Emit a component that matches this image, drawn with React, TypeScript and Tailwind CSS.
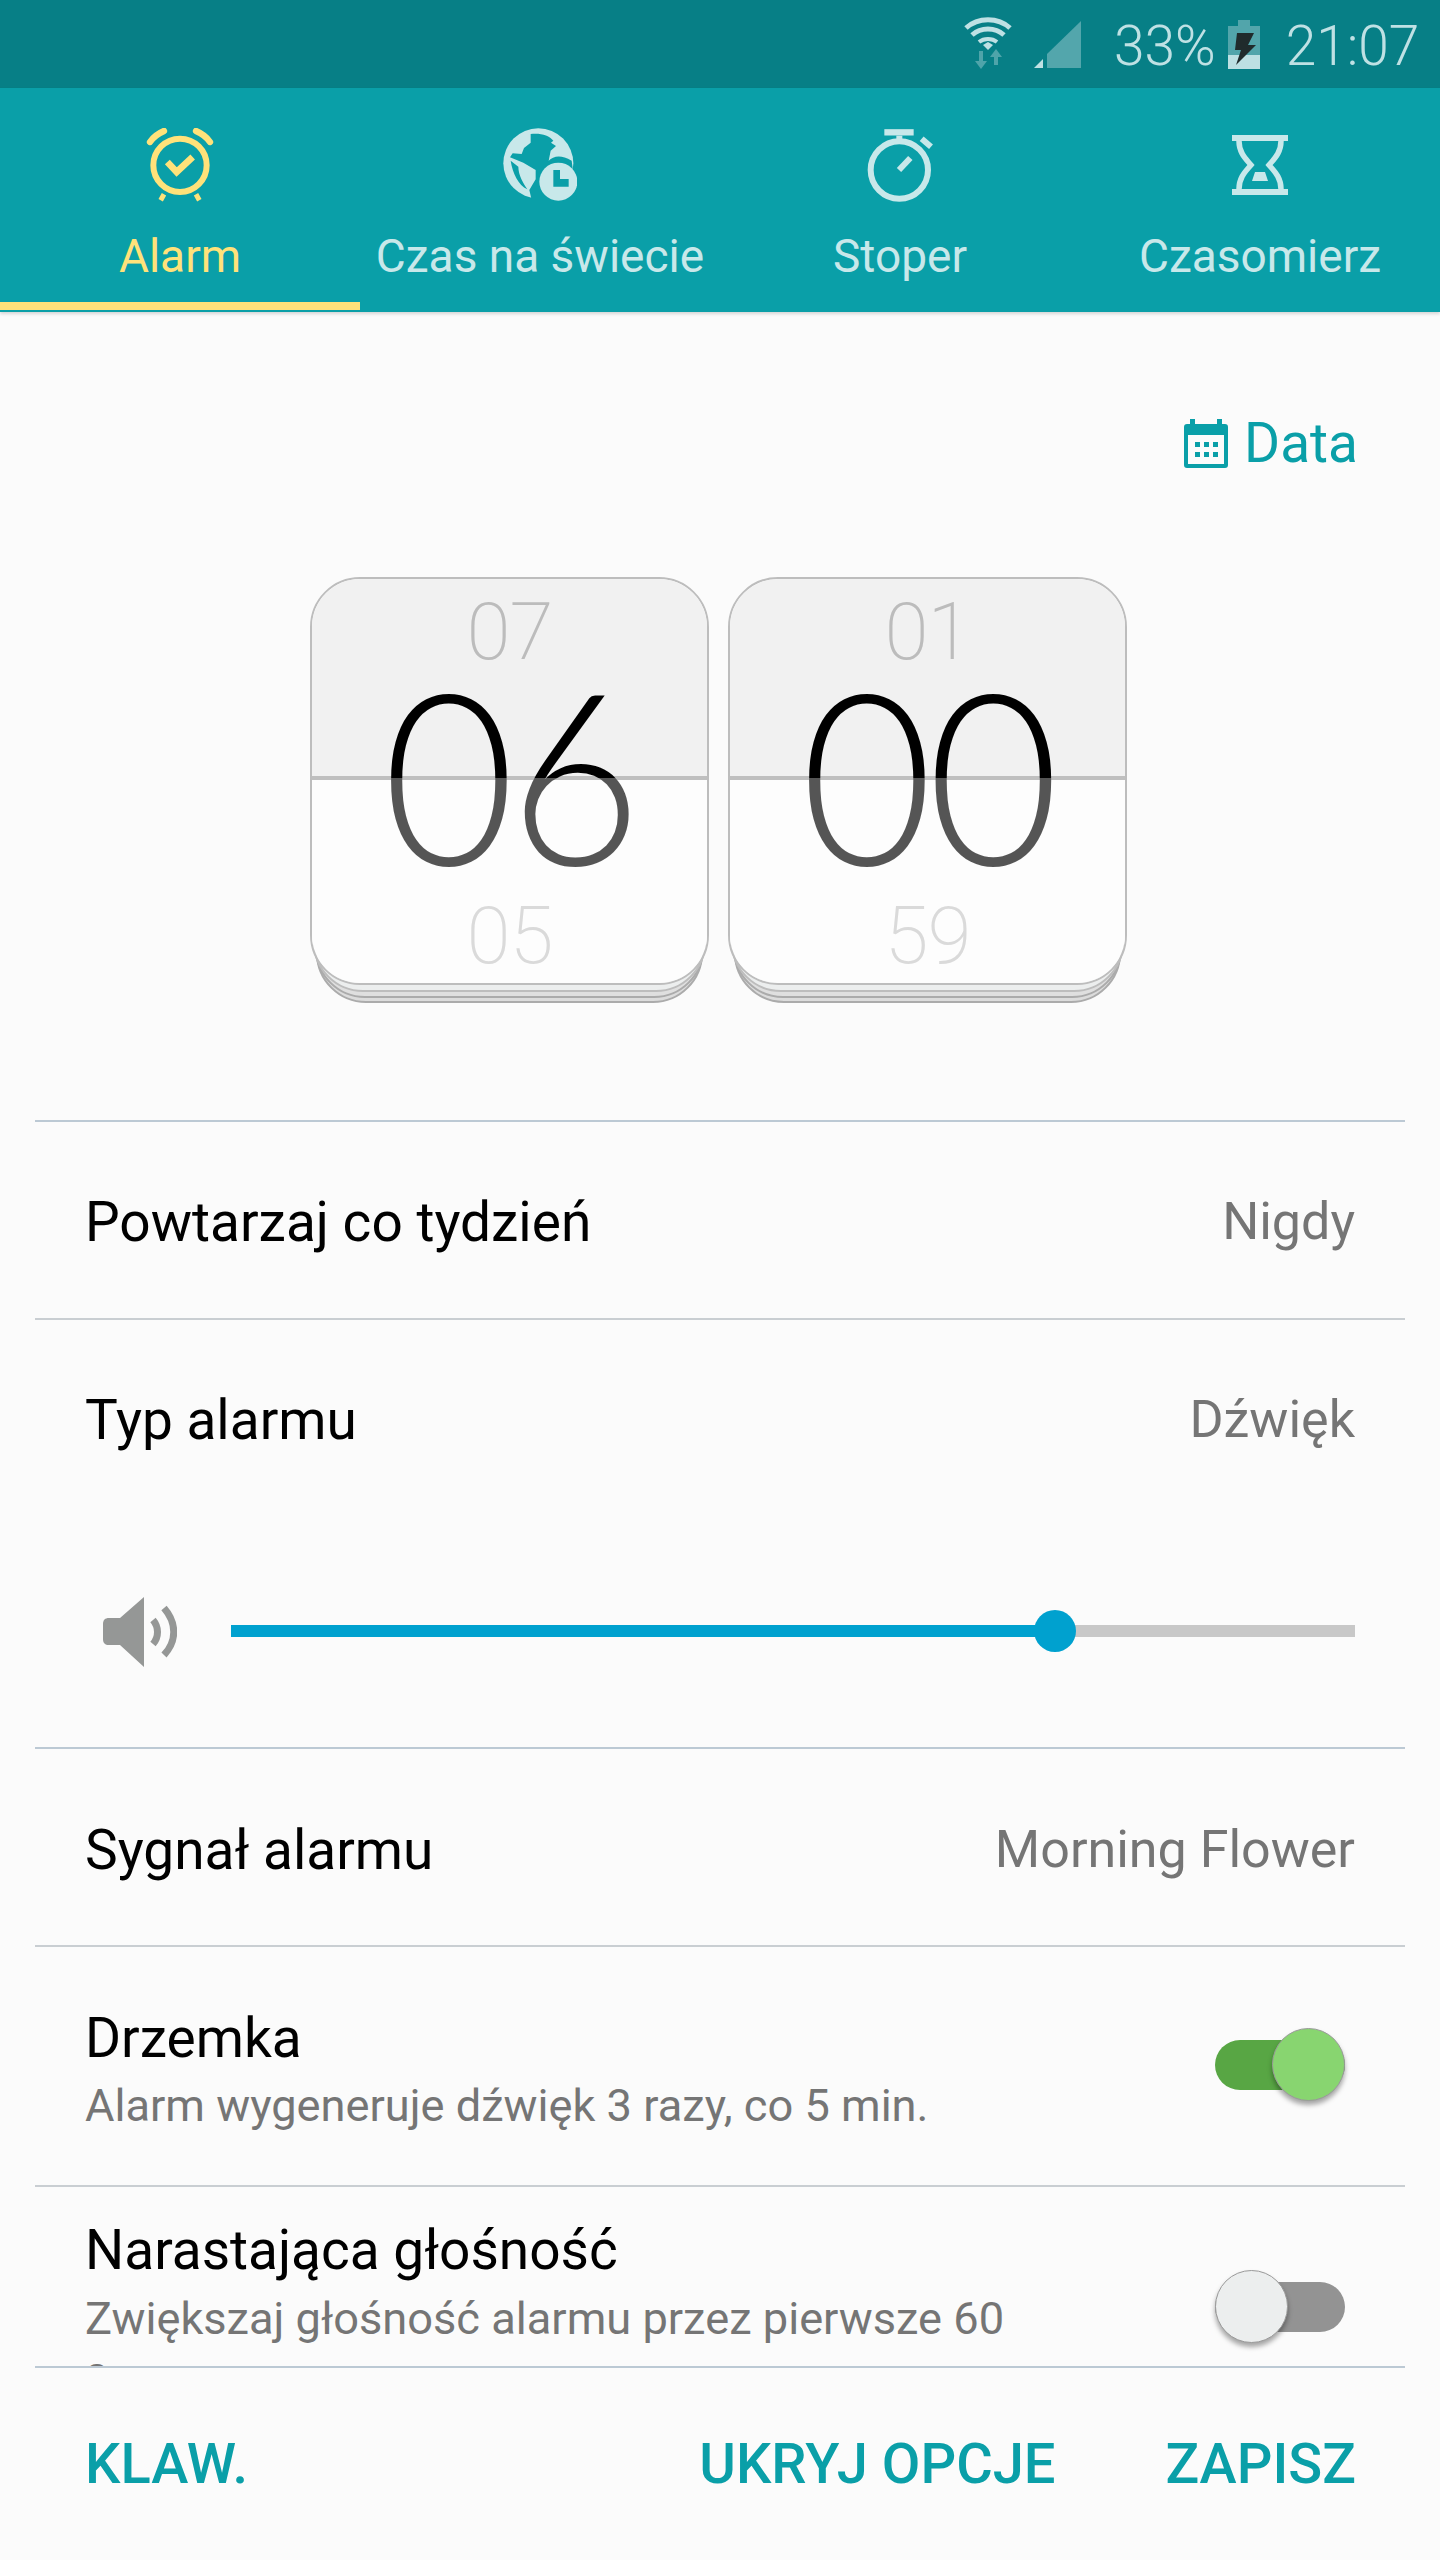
import type { ReactNode } from "react";

const font = { fontFamily: "Roboto, sans-serif" };
const flipFont = { fontFamily: "Lato, Roboto, sans-serif" };

function WifiIcon() {
  return (
    <svg width="50" height="54" viewBox="0 0 50 54" fill="none">
      <path d="M2 11C14 0 34 0 46 11" stroke="#bfe1e4" strokeWidth="5" />
      <path d="M8 18C17 10 31 10 40 18" stroke="#bfe1e4" strokeWidth="5" />
      <path d="M15 25C20 21 28 21 33 25" stroke="#bfe1e4" strokeWidth="4" />
      <path d="M19 28L24 25L29 28L24 33Z" fill="#bfe1e4" />
      <path d="M15 34H19V44H23L17 52L11 44H15Z" fill="#4fa4aa" />
      <path d="M30 48H34V40H38L32 32L26 40H30Z" fill="#4fa4aa" />
    </svg>
  );
}

function SignalIcon() {
  return (
    <svg width="47" height="47" viewBox="0 0 47 47">
      <path d="M47 0V47H13V33Z" fill="#53a6ac" />
      <path d="M9 38V47H0Z" fill="#bfe1e4" />
    </svg>
  );
}

function BatteryIcon() {
  return (
    <svg width="32" height="49" viewBox="0 0 32 49">
      <path d="M10 0H22V6H32V35H0V6H10Z" fill="#52a5ab" />
      <rect y="35" width="32" height="14" fill="#bde0e3" />
      <path d="M9 13H26L20 25H28L8 45L13 30H7Z" fill="#202b2c" />
    </svg>
  );
}

function AlarmIcon() {
  return (
    <svg width="68" height="74" viewBox="48 23 204 222" fill="none" stroke="#ffe27a">
      <circle cx="150" cy="135" r="80" strokeWidth="18" />
      <path d="M112 125L140 155L188 110" strokeWidth="20" />
      <path d="M60 65Q74 44 102 32M198 32Q226 44 240 65" strokeWidth="19" strokeLinecap="round" />
      <path d="M102 222L92 240M198 222L208 240" strokeWidth="15" />
    </svg>
  );
}

function GlobeIcon() {
  return (
    <svg width="74" height="74" viewBox="39 24 222 222">
      <circle cx="145" cy="130" r="105" fill="#c8e8ea" />
      <path
        d="M122 42C150 38 178 46 190 62L183 68L198 78L182 92L176 122C190 108 212 102 245 122L260 240L125 240L118 210L137 178L137 150L100 128L60 112L68 100L95 102L102 84L122 68Z"
        fill="#0a9fa8"
      />
      <path d="M62 122L85 140C85 165 100 190 112 208C85 195 68 160 62 122Z" fill="#0a9fa8" />
      <circle cx="205" cy="185" r="57" fill="#c8e8ea" />
      <path d="M190 150H210V177H236V200H190Z" fill="#0a9fa8" />
    </svg>
  );
}

function StopwatchIcon() {
  return (
    <svg width="66" height="74" viewBox="50 24 198 222" fill="none" stroke="#c8e8ea">
      <circle cx="147" cy="150" r="86" strokeWidth="18" />
      <path d="M102 37H190" strokeWidth="19" />
      <path d="M147 47V62" strokeWidth="18" />
      <path d="M214 56L242 80" strokeWidth="18" />
      <path d="M146 150L180 114" strokeWidth="18" />
    </svg>
  );
}

function HourglassIcon() {
  return (
    <svg width="56" height="60" viewBox="0 0 56 60" fill="none" stroke="#c8e8ea">
      <path d="M0 3H56M0 57H56" strokeWidth="6" />
      <path d="M7 6C7 18 14 24 19 30C14 36 7 42 7 54M49 6C49 18 42 24 37 30C42 36 49 42 49 54" strokeWidth="5.5" />
      <path d="M23 37H33L36 46H20Z" fill="#c8e8ea" stroke="none" />
    </svg>
  );
}

function CalendarIcon() {
  return (
    <svg width="44" height="49" viewBox="0 0 44 49">
      <path d="M6 0H11V5H33V0H38V5H41C43 5 44 6 44 8V46C44 48 43 49 41 49H3C1 49 0 48 0 46V8C0 6 1 5 3 5H6Z" fill="#0a9fa8" />
      <rect x="4" y="16" width="36" height="29" fill="#fbfbfb" />
      <path d="M11 23h5v5h-5zM20 23h5v5h-5zM29 23h5v5h-5zM11 33h5v5h-5zM20 33h5v5h-5zM29 33h5v5h-5z" fill="#0a9fa8" />
    </svg>
  );
}

function SpeakerIcon() {
  return (
    <svg width="74" height="70" viewBox="0 0 74 70" fill="none">
      <path d="M41 0V70L17 48H6C2 48 0 46 0 42V27C0 23 2 21 6 21H17Z" fill="#959796" />
      <path d="M50 23C56 30 56 40 50 47" stroke="#959796" strokeWidth="7" />
      <path d="M61 11C74 26 74 44 61 58" stroke="#959796" strokeWidth="7" />
    </svg>
  );
}

function Tab({ icon, label, active }: { icon: ReactNode; label: string; active?: boolean }) {
  return (
    <div className="relative flex flex-col items-center">
      <div className="mt-[40px] flex h-[74px] items-center justify-center">{icon}</div>
      <span className={`mt-[27px] text-[46px] leading-[54px] ${active ? "text-[#ffe27a]" : "text-[#c8e8ea]"}`}>{label}</span>
      {active && <div className="absolute left-0 right-0 top-[214px] h-[8px] bg-[#ffe27a]" />}
    </div>
  );
}

function Flip({ top, main, bottom }: { top: string; main: string; bottom: string }) {
  return (
    <div className="relative h-[426px] w-[399px]">
      <div className="absolute bottom-0 left-[6px] right-[6px] h-[100px] rounded-b-[50px] border-2 border-[#ababab] bg-[#dcdcdc]" />
      <div className="absolute bottom-[5px] left-[5px] right-[5px] h-[100px] rounded-b-[50px] border-2 border-[#ababab] bg-[#dfdfdf]" />
      <div className="absolute bottom-[11px] left-[3px] right-[3px] h-[100px] rounded-b-[50px] border-2 border-[#bdbdbd] bg-[#eceeee]" />
      <div className="relative flex h-[408px] flex-col overflow-hidden rounded-[50px] border-2 border-[#bdbdbd]">
        <div className="flex h-[197px] items-start justify-center bg-[#f1f1f1] pt-[8px] text-[80px] font-extralight leading-[90px] tracking-[-1px] text-[#bcbcbc]">
          {top}
        </div>
        <div className="h-[4px] bg-[#bfbfbf]" />
        <div className="flex flex-1 items-end justify-center bg-[#fdfdfd] pb-[2px] text-[80px] font-extralight leading-[90px] tracking-[-1px] text-[#dadada]">
          {bottom}
        </div>
        <div className="absolute inset-0 flex items-center justify-center pb-[18px]" style={flipFont}>
          <span className="scale-x-[0.95] bg-[linear-gradient(#000_0,#000_156px,#555_156px,#555_100%)] bg-clip-text text-[240px] font-light leading-[300px] tracking-[-6px] text-transparent">
            {main}
          </span>
        </div>
      </div>
    </div>
  );
}

function Row({ title, value, className }: { title: string; value: string; className?: string }) {
  return (
    <div className={`mx-[35px] flex items-center justify-between px-[50px] ${className ?? ""}`}>
      <span className="text-[55px] leading-[64px] text-black">{title}</span>
      <span className="text-[52px] leading-[64px] text-[#757575]">{value}</span>
    </div>
  );
}

function Toggle({ on }: { on: boolean }) {
  return (
    <div className="relative h-[50px] w-[130px]">
      <div className={`h-full rounded-full ${on ? "bg-[#58a644]" : "bg-[#939393]"}`} />
      <div
        className={`absolute top-[-12px] h-[73px] w-[73px] rounded-full border border-[#9a9a9a] shadow-[0_4px_5px_rgba(0,0,0,0.35)] ${
          on ? "right-0 bg-[#88d570]" : "left-0 bg-[#eceeee]"
        }`}
      />
    </div>
  );
}

export default function App() {
  return (
    <div className="flex h-[2560px] w-[1440px] flex-col overflow-hidden bg-[#fbfbfb]" style={font}>
      <div className="flex h-[88px] items-center bg-[#077f86] text-[#bfe1e4]">
        <div className="ml-[964px]"><WifiIcon /></div>
        <div className="ml-[20px]"><SignalIcon /></div>
        <span className="ml-[33px] mt-[4px] text-[55px] font-light leading-[60px]">33%</span>
        <div className="ml-[12px]"><BatteryIcon /></div>
        <span className="ml-[26px] mt-[4px] text-[55px] font-light leading-[60px]">21:07</span>
      </div>

      <div className="grid h-[224px] grid-cols-4 bg-[#0a9fa8] shadow-[0_2px_3px_rgba(0,0,0,0.15)]">
        <Tab icon={<AlarmIcon />} label="Alarm" active />
        <Tab icon={<GlobeIcon />} label="Czas na świecie" />
        <Tab icon={<StopwatchIcon />} label="Stoper" />
        <Tab icon={<HourglassIcon />} label="Czasomierz" />
      </div>

      <div className="h-[2054px] overflow-hidden">
        <div className="flex items-center justify-end gap-[16px] pr-[82px] pt-[107px]">
          <CalendarIcon />
          <span className="text-[55px] leading-[49px] text-[#0a9fa8]">Data</span>
        </div>

        <div className="ml-[310px] mt-[109px] flex gap-[19px]">
          <Flip top="07" main="06" bottom="05" />
          <Flip top="01" main="00" bottom="59" />
        </div>

        <div className="mx-[35px] mt-[117px] h-[2px] bg-[#bcc9d4]" />
        <Row title="Powtarzaj co tydzień" value="Nigdy" className="h-[196px] pt-[3px]" />
        <div className="mx-[35px] h-[2px] bg-[#c9ced2]" />
        <Row title="Typ alarmu" value="Dźwięk" className="h-[196px] pt-[4px]" />

        <div className="mx-[35px] flex h-[231px] items-start pl-[68px] pr-[50px] pt-[81px]">
          <SpeakerIcon />
          <div className="relative ml-[54px] mt-[28px] h-[12px] flex-1 bg-[#c8c8c8]">
            <div className="h-full w-[824px] bg-[#00a1cf]" />
            <div className="absolute left-[803px] top-[-15px] h-[42px] w-[42px] rounded-full bg-[#00a1cf]" />
          </div>
        </div>

        <div className="mx-[35px] h-[2px] bg-[#bcc9d4]" />
        <Row title="Sygnał alarmu" value="Morning Flower" className="h-[196px] pt-[5px]" />
        <div className="mx-[35px] h-[2px] bg-[#c9ced2]" />

        <div className="mx-[35px] flex h-[238px] items-center justify-between pl-[50px] pr-[60px] pt-[6px]">
          <div className="flex flex-col">
            <span className="text-[55px] leading-[64px] text-black">Drzemka</span>
            <span className="mt-[9px] text-[45.2px] leading-[54px] text-[#757575]">Alarm wygeneruje dźwięk 3 razy, co 5 min.</span>
          </div>
          <div className="mb-[8px]"><Toggle on /></div>
        </div>
        <div className="mx-[35px] h-[2px] bg-[#c9ced2]" />

        <div className="mx-[35px] flex items-start justify-between pl-[50px] pr-[60px] pt-[31px]">
          <div className="flex w-[960px] flex-col">
            <span className="text-[55px] leading-[64px] text-black">Narastająca głośność</span>
            <span className="mt-[10px] text-[45.2px] leading-[54px] text-[#757575]">Zwiększaj głośność alarmu przez pierwsze 60 s.</span>
          </div>
          <div className="mt-[64px]"><Toggle on={false} /></div>
        </div>
      </div>

      <div className="mx-[35px] h-[2px] bg-[#bcc9d4]" />
      <div className="flex flex-1 items-center justify-between pl-[85px] pr-[84px] text-[56px] font-medium leading-[64px] text-[#0a9fa8]">
        <span>KLAW.</span>
        <div className="flex gap-[110px]">
          <span>UKRYJ OPCJE</span>
          <span>ZAPISZ</span>
        </div>
      </div>
    </div>
  );
}
